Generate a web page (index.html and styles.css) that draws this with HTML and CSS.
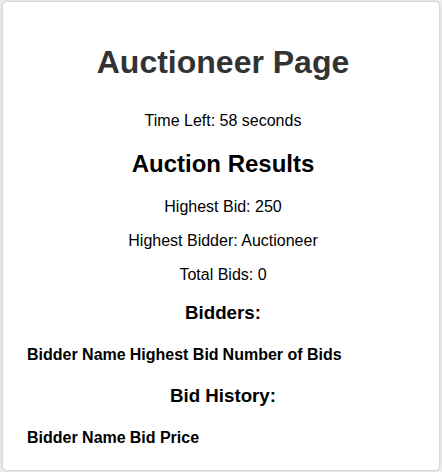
FILE: index.html
```html
<!DOCTYPE html>
<html>
<head>
<meta charset="utf-8">
<title>Auctioneer Page</title>
<link rel="stylesheet" href="styles.css">
</head>
<body>
<div class="card">
  <h1 class="title">Auctioneer Page</h1>
  <p class="timer">Time Left: 58 seconds</p>
  <h2 class="results-title">Auction Results</h2>
  <p>Highest Bid: 250</p>
  <p>Highest Bidder: Auctioneer</p>
  <p>Total Bids: 0</p>
  <h3 class="section-title">Bidders:</h3>
  <table class="data">
    <thead>
      <tr><th>Bidder Name</th><th>Highest Bid</th><th>Number of Bids</th></tr>
    </thead>
  </table>
  <h3 class="section-title">Bid History:</h3>
  <table class="data">
    <thead>
      <tr><th>Bidder Name</th><th>Bid Price</th></tr>
    </thead>
  </table>
</div>
</body>
</html>
```
FILE: styles.css
```css
html, body {
  margin: 0;
  background: #f0f0f0;
}
body {
  padding: 1px 2px 1px 2px;
  font-family: "Liberation Sans", Arial, sans-serif;
  color: #000;
}
.card {
  background: #fff;
  border: 1px solid #d8d8d8;
  border-radius: 5px;
  box-shadow: 0 0 4px rgba(0,0,0,0.12);
  padding: 20px 17px 20px 21px;
  text-align: center;
  min-height: 426px;
}
.title {
  font-size: 32px;
  color: #333;
  margin: 22px 0 31px;
}
p {
  font-size: 16px;
  margin: 16px 0;
}
.results-title {
  font-size: 24px;
  margin: 20px 0;
}
.section-title {
  font-size: 18.72px;
  margin: 18px 0 19px;
}
.data {
  font-size: 16px;
}
.data th {
  padding: 1px;
}
```
